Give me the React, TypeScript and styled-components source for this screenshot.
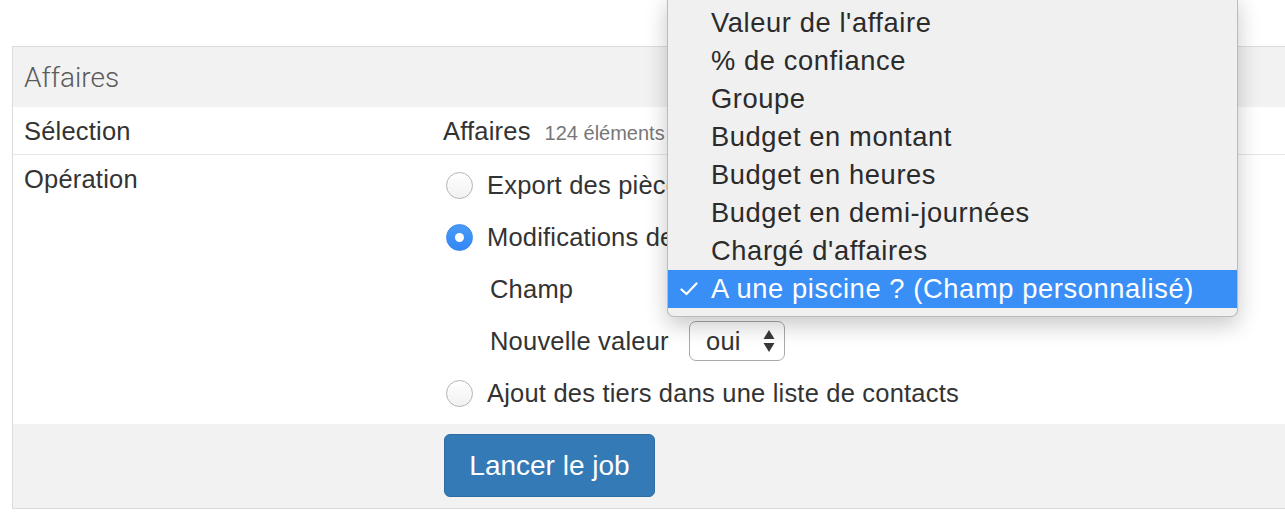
import React from "react";
import styled, { createGlobalStyle } from "styled-components";

const Global = createGlobalStyle`
  html, body { margin: 0; padding: 0; background: #fff; overflow: hidden; }
  body { font-family: "Liberation Sans", Arial, sans-serif; color: #333; }
`;

const Page = styled.div`
  position: relative;
  padding: 46px 0 0 12px;
  width: 1285px;
  height: 514px;
  box-sizing: border-box;
  overflow: hidden;
`;

const Panel = styled.section`
  border: 1px solid #dcdcdc;
  border-right: none;
  width: 1300px;
`;

const Heading = styled.div`
  height: 60px;
  background: #f2f2f2;
  display: flex;
  align-items: center;
  padding-left: 11px;
  font-family: Roboto, "Liberation Sans", sans-serif;
  font-weight: 300;
  font-size: 28px;
  color: #5a5a5a;
`;

const Row = styled.div<{ $border?: boolean }>`
  display: grid;
  grid-template-columns: 430px 1fr;
  border-bottom: ${(p) => (p.$border ? "1px solid #e6e6e6" : "none")};
  padding: ${(p) => (p.$border ? "6px 0 5px" : "0")};
`;

const Label = styled.div<{ $pad?: number }>`
  padding-left: 11px;
  padding-top: ${(p) => p.$pad ?? 0}px;
  font-size: 25.5px;
  letter-spacing: 0.2px;
  line-height: 36px;
  color: #333;
`;

const Value = styled.div`
  display: flex;
  align-items: baseline;
  height: 36px;
  font-size: 25.5px;
  letter-spacing: 0.2px;
  line-height: 36px;
  color: #333;
`;

const Count = styled.span`
  font-size: 20px;
  line-height: 20px;
  letter-spacing: 0;
  color: #777;
  margin-left: 14px;
`;

const Options = styled.div`
  padding: 4px 0 5px;
  display: flex;
  flex-direction: column;
`;

const RadioLine = styled.label`
  height: 52px;
  display: flex;
  align-items: center;
  gap: 14px;
  padding-left: 3px;
  font-size: 25.5px;
  letter-spacing: 0.2px;
  color: #333;
  white-space: nowrap;
`;

const Radio = styled.span<{ $checked?: boolean }>`
  width: 27px;
  height: 27px;
  border-radius: 50%;
  box-sizing: border-box;
  display: inline-flex;
  align-items: center;
  justify-content: center;
  flex: none;
  background: ${(p) =>
    p.$checked ? "linear-gradient(#4b9af8, #3287f4)" : "linear-gradient(#ffffff, #f1f1f1)"};
  border: 1px solid ${(p) => (p.$checked ? "#3a87ee" : "#b4b4b4")};
  &::after {
    content: "";
    width: 9px;
    height: 9px;
    border-radius: 50%;
    background: #fff;
    display: ${(p) => (p.$checked ? "block" : "none")};
  }
`;

const SubLine = styled.div`
  height: 52px;
  display: grid;
  grid-template-columns: 199px auto;
  align-items: center;
  padding-left: 47px;
  font-size: 25.5px;
  letter-spacing: 0.2px;
  color: #333;
  white-space: nowrap;
`;

const SelectBox = styled.div`
  justify-self: start;
  min-width: 96px;
  height: 40px;
  box-sizing: border-box;
  border: 1px solid #a9a9a9;
  border-radius: 7px;
  background: #fff;
  display: flex;
  align-items: center;
  justify-content: space-between;
  gap: 18px;
  padding: 0 9px 0 16px;
  font-size: 25.5px;
  color: #333;
`;

const Footer = styled.div`
  background: #f2f2f2;
  display: grid;
  grid-template-columns: 430px 1fr;
  padding: 10px 0 11px;
`;

const Button = styled.button`
  grid-column: 2;
  justify-self: start;
  margin-left: 1px;
  width: 211px;
  height: 63px;
  border: 1px solid #2e6da4;
  border-radius: 6px;
  background: #337ab7;
  color: #fff;
  font-family: "Liberation Sans", Arial, sans-serif;
  font-size: 28px;
  cursor: pointer;
`;

const Menu = styled.ul`
  position: absolute;
  left: 667px;
  top: -6px;
  width: 571px;
  margin: 0;
  padding: 9px 0 8px;
  list-style: none;
  background: #f0f0f0;
  border: 1px solid rgba(0, 0, 0, 0.22);
  border-radius: 7px;
  box-sizing: border-box;
  box-shadow: 0 8px 22px rgba(0, 0, 0, 0.22);
`;

const Item = styled.li<{ $active?: boolean }>`
  height: 38px;
  display: flex;
  align-items: center;
  padding-left: 12px;
  gap: 13px;
  font-size: 27.3px;
  letter-spacing: 0.6px;
  white-space: nowrap;
  color: ${(p) => (p.$active ? "#fff" : "#2b2b2b")};
  background: ${(p) => (p.$active ? "#3a8ff7" : "transparent")};
`;

const CheckSlot = styled.span`
  width: 18px;
  display: inline-flex;
  align-items: center;
`;

const Arrows = () => (
  <svg width="12" height="24" viewBox="0 0 12 24">
    <path d="M6 1 L11.5 10 H0.5 Z" fill="#3a3a3a" />
    <path d="M6 23 L11.5 14 H0.5 Z" fill="#3a3a3a" />
  </svg>
);

const Check = () => (
  <svg width="18" height="14" viewBox="0 0 18 14">
    <path d="M1.5 7.5 L6.5 12 L16.5 1.5" fill="none" stroke="#fff" strokeWidth="2.2" strokeLinecap="round" strokeLinejoin="round" />
  </svg>
);

const items = [
  "Valeur de l'affaire",
  "% de confiance",
  "Groupe",
  "Budget en montant",
  "Budget en heures",
  "Budget en demi-journées",
  "Chargé d'affaires",
  "A une piscine ? (Champ personnalisé)",
];

export default function App() {
  return (
    <Page>
      <Global />
      <Panel>
        <Heading>Affaires</Heading>
        <Row $border>
          <Label>Sélection</Label>
          <Value>
            Affaires<Count>124 éléments</Count>
          </Value>
        </Row>
        <Row>
          <Label $pad={6}>Opération</Label>
          <Options>
            <RadioLine>
              <Radio />
              Export des pièces comptables
            </RadioLine>
            <RadioLine>
              <Radio $checked />
              Modifications des affaires
            </RadioLine>
            <SubLine>
              <span>Champ</span>
              <SelectBox>A une piscine ? <Arrows /></SelectBox>
            </SubLine>
            <SubLine>
              <span>Nouvelle valeur</span>
              <SelectBox>
                oui <Arrows />
              </SelectBox>
            </SubLine>
            <RadioLine>
              <Radio />
              Ajout des tiers dans une liste de contacts
            </RadioLine>
          </Options>
        </Row>
        <Footer>
          <Button>Lancer le job</Button>
        </Footer>
      </Panel>
      <Menu>
        {items.map((t, i) => {
          const active = i === items.length - 1;
          return (
            <Item key={t} $active={active}>
              <CheckSlot>{active && <Check />}</CheckSlot>
              {t}
            </Item>
          );
        })}
      </Menu>
    </Page>
  );
}
